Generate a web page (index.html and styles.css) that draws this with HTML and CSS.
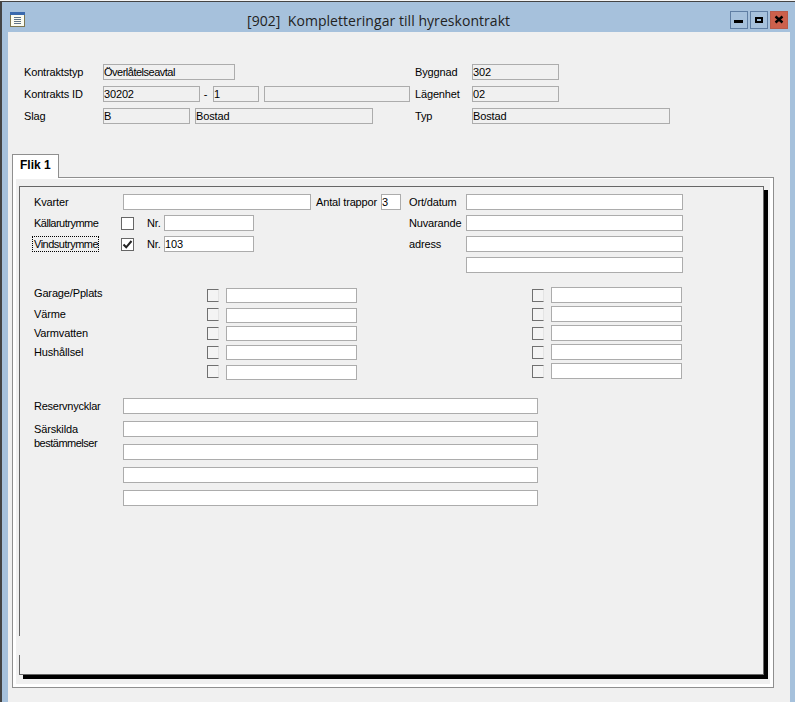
FILE: index.html
```html
<!DOCTYPE html>
<html lang="sv">
<head>
    <meta charset="UTF-8">
    <meta name="viewport" content="width=device-width, initial-scale=1.0">
    <title>Kompletteringar till hyreskontrakt</title>
    <link rel="stylesheet" href="styles.css">
</head>
<body>
<div class="window">
    <div class="titlebar">
        <svg class="app-icon" width="16" height="16" viewBox="0 0 16 16">
            <rect x="0.5" y="0.5" width="14" height="14" fill="#fbfbf0" stroke="#7d7650"/>
            <rect x="0" y="0" width="15" height="3" fill="#3a69ad"/>
            <path d="M4 5.5h7M4 7.5h7M4 9.5h7M4 11.5h7" stroke="#5f7388" stroke-width="1"/>
        </svg>
        <div class="title">[902]  Kompletteringar till hyreskontrakt</div>
        <div class="win-buttons">
            <div class="win-btn">
                <svg width="16" height="16" viewBox="0 0 16 16"><rect x="3" y="8" width="9" height="3" fill="#000"/></svg>
            </div>
            <div class="win-btn">
                <svg width="16" height="16" viewBox="0 0 16 16"><rect x="5" y="6" width="6" height="4" fill="none" stroke="#000" stroke-width="2"/></svg>
            </div>
            <div class="win-btn close">
                <svg width="16" height="16" viewBox="0 0 16 16"><path d="M4.5 4.5l7 6M11.5 4.5l-7 6" stroke="#000" stroke-width="2.4"/></svg>
            </div>
        </div>
    </div>

    <div class="content">
        <div class="head">
            <div class="head-left">
                <div class="row">
                    <label class="lbl w79">Kontraktstyp</label>
                    <input class="field ro w132 tight" value="Överlåtelseavtal" readonly>
                </div>
                <div class="row">
                    <label class="lbl w79">Kontrakts ID</label>
                    <input class="field ro w97" value="30202" readonly>
                    <span class="dash">-</span>
                    <input class="field ro w46" value="1" readonly>
                    <input class="field ro w146 ml5" readonly>
                </div>
                <div class="row">
                    <label class="lbl w79">Slag</label>
                    <input class="field ro w87" value="B" readonly>
                    <input class="field ro w178 ml5" value="Bostad" readonly>
                </div>
            </div>
            <div class="head-right">
                <div class="row">
                    <label class="lbl w57">Byggnad</label>
                    <input class="field ro w87" value="302" readonly>
                </div>
                <div class="row">
                    <label class="lbl w57">Lägenhet</label>
                    <input class="field ro w87" value="02" readonly>
                </div>
                <div class="row">
                    <label class="lbl w57">Typ</label>
                    <input class="field ro w198" value="Bostad" readonly>
                </div>
            </div>
        </div>

        <div class="tab">Flik 1</div>
        <div class="tab-panel">
            <div class="tab-inner">
                <div class="frame">
                    <div class="frame-gap"></div>

                    <div class="top-section">
                        <div class="top-left">
                            <div class="row">
                                <label class="lbl w89">Kvarter</label>
                                <input class="field w188" >
                                <label class="lbl ml5 w65">Antal trappor</label>
                                <input class="field w20" value="3">
                            </div>
                            <div class="row">
                                <label class="lbl w87 tight">Källarutrymme</label>
                                <span class="check"></span>
                                <label class="lbl nr">Nr.</label>
                                <input class="field w90">
                            </div>
                            <div class="row">
                                <div class="lbl w87"><label class="focused tight">Vindsutrymme</label></div>
                                <span class="check">
                                    <svg width="11" height="11" viewBox="0 0 11 11"><path d="M1.5 5.5l2.7 2.8L9.5 2" fill="none" stroke="#222" stroke-width="2"/></svg>
                                </span>
                                <label class="lbl nr">Nr.</label>
                                <input class="field w90" value="103">
                            </div>
                        </div>
                        <div class="top-right">
                            <div class="row">
                                <label class="lbl w57">Ort/datum</label>
                                <input class="field w217">
                            </div>
                            <div class="row">
                                <label class="lbl w57">Nuvarande</label>
                                <input class="field w217">
                            </div>
                            <div class="row">
                                <label class="lbl w57">adress</label>
                                <input class="field w217">
                            </div>
                            <div class="row">
                                <span class="w57"></span>
                                <input class="field w217">
                            </div>
                        </div>
                    </div>

                    <div class="options">
                        <div class="opt-labels">
                            <label class="lbl">Garage/Pplats</label>
                            <label class="lbl">Värme</label>
                            <label class="lbl">Varmvatten</label>
                            <label class="lbl">Hushållsel</label>
                        </div>
                        <div class="opt-list first">
                            <div class="opt-row"><span class="box"></span><input class="field w131"></div>
                            <div class="opt-row"><span class="box"></span><input class="field w131"></div>
                            <div class="opt-row"><span class="box"></span><input class="field w131"></div>
                            <div class="opt-row"><span class="box"></span><input class="field w131"></div>
                            <div class="opt-row"><span class="box"></span><input class="field w131"></div>
                        </div>
                        <div class="opt-list second">
                            <div class="opt-row"><span class="box"></span><input class="field w131"></div>
                            <div class="opt-row"><span class="box"></span><input class="field w131"></div>
                            <div class="opt-row"><span class="box"></span><input class="field w131"></div>
                            <div class="opt-row"><span class="box"></span><input class="field w131"></div>
                            <div class="opt-row"><span class="box"></span><input class="field w131"></div>
                        </div>
                    </div>

                    <div class="notes">
                        <div class="note-labels">
                            <label class="lbl narrow">Reservnycklar</label>
                            <label class="lbl special">Särskilda<br><span class="tight">bestämmelser</span></label>
                        </div>
                        <div class="note-fields">
                            <input class="field w415">
                            <input class="field w415">
                            <input class="field w415">
                            <input class="field w415">
                            <input class="field w415">
                        </div>
                    </div>
                </div>
            </div>
        </div>
    </div>
</div>
</body>
</html>
```

FILE: styles.css
```css
html, body {
    margin: 0;
    padding: 0;
    height: 702px;
    overflow: hidden;
    background-color: #f4f4f4;
}

body {
    font-family: "Liberation Sans", Arial, sans-serif;
    font-size: 11px;
    color: #000;
}

.window {
    margin-top: 1px;
    height: 701px;
    box-sizing: border-box;
    border-top: 1px solid #444;
    border-left: 2px solid #444;
    background-color: #a6c1dc;
    display: flex;
    flex-direction: column;
}

.titlebar {
    height: 30px;
    flex: none;
    display: flex;
    align-items: flex-start;
}

.app-icon {
    margin: 10px 0 0 8px;
    flex: none;
}

.title {
    margin: 9px 0 0 221px;
    font-family: "Open Sans", sans-serif;
    font-size: 14px;
    line-height: 20px;
    letter-spacing: 0.05px;
    color: #222;
    white-space: pre;
}

.win-buttons {
    margin: 9px 0 0 auto;
    padding-right: 7px;
    display: flex;
    gap: 2px;
}

.win-btn {
    width: 16px;
    height: 16px;
    border: 1px solid #5f7ea3;
    background-color: #a6c1dc;
}

.win-btn svg {
    display: block;
}

.win-btn.close {
    background-color: #cc604c;
    border-color: #b85a4a;
}

.content {
    flex: 1;
    margin: 0 5px 0 6px;
    background-color: #f0f0f0;
    padding: 32px 0 0 4px;
}

.head {
    display: flex;
    padding-left: 12px;
}

.head-left {
    width: 391px;
}

.head-left,
.head-right,
.top-left,
.top-right {
    display: flex;
    flex-direction: column;
    gap: 6px;
}

.top-left,
.top-right {
    gap: 5px;
}

.top-left {
    width: 375px;
}

.row {
    display: flex;
    align-items: center;
    height: 16px;
}

.lbl {
    display: block;
    line-height: 14px;
    letter-spacing: -0.15px;
    white-space: nowrap;
    flex: none;
}

.field {
    display: block;
    box-sizing: border-box;
    height: 16px;
    flex: none;
    margin: 0;
    padding: 0;
    border: 1px solid #acacac;
    border-radius: 0;
    background-color: #fff;
    font-family: "Liberation Sans", Arial, sans-serif;
    font-size: 11px;
    letter-spacing: -0.15px;
    color: #000;
    outline: none;
}

.field.ro {
    background-color: #f0f0f0;
}

.lbl.tight,
.field.tight,
.tight {
    letter-spacing: -0.5px;
}

.lbl.narrow {
    letter-spacing: -0.25px;
}

.w20 { width: 20px; }
.w46 { width: 46px; }
.w57 { width: 57px; flex: none; }
.w65 { width: 65px; }
.w79 { width: 79px; }
.w87 { width: 87px; }
.w89 { width: 89px; }
.w90 { width: 90px; }
.w97 { width: 97px; }
.w131 { width: 131px; }
.w132 { width: 132px; }
.w146 { width: 146px; }
.w178 { width: 178px; }
.w188 { width: 188px; }
.w198 { width: 198px; }
.w217 { width: 217px; }
.w415 { width: 415px; }

.ml5 {
    margin-left: 5px;
}

.dash {
    box-sizing: border-box;
    width: 13px;
    padding-right: 2px;
    text-align: center;
    flex: none;
}

.tab {
    position: relative;
    z-index: 1;
    box-sizing: border-box;
    width: 47px;
    height: 24px;
    margin: 30px 0 -1px 0;
    padding: 3px 0 0 7px;
    border: 1px solid #8f8f8f;
    border-bottom: none;
    background-color: #fff;
    font-weight: bold;
    font-size: 12px;
    line-height: 14px;
}

.tab-panel {
    box-sizing: border-box;
    width: 762px;
    height: 511px;
    border: 1px solid #8f8f8f;
}

.tab-inner {
    box-sizing: border-box;
    height: 509px;
    border: 3px solid #fff;
    border-top-width: 1px;
    background-color: #f0f0f0;
    padding: 7px 0 0 3px;
}

.frame {
    position: relative;
    box-sizing: border-box;
    width: 745px;
    height: 489px;
    border: 1px solid #666;
    box-shadow: 4px 4px 0 #000;
    padding: 7px 0 0 14px;
    background-color: #f0f0f0;
}

.frame-gap {
    position: absolute;
    left: -1px;
    top: 449px;
    width: 1px;
    height: 19px;
    background-color: #f0f0f0;
}

.top-section {
    display: flex;
}

.check {
    box-sizing: border-box;
    width: 13px;
    height: 13px;
    flex: none;
    border: 1px solid #666;
    background-color: #fff;
    display: block;
}

.check svg {
    display: block;
}

.nr {
    margin-left: 13px;
    width: 17px;
}

.focused {
    display: inline-block;
    margin-left: -1px;
    padding-left: 1px;
    outline: 1px dotted #000;
}

.options {
    display: flex;
    margin-top: 13px;
}

.opt-labels {
    width: 173px;
    flex: none;
    display: flex;
    flex-direction: column;
    gap: 5px;
}

.opt-labels .lbl:first-child {
    margin-bottom: 2px;
}

.opt-list {
    display: flex;
    flex-direction: column;
}

.opt-list.first {
    width: 325px;
    margin-top: 2px;
}

.opt-list.second {
    margin-top: 1px;
    gap: 3px;
}

.opt-row {
    display: flex;
    align-items: flex-start;
    gap: 7px;
}

.box {
    box-sizing: border-box;
    width: 12px;
    height: 13px;
    margin-top: 2px;
    flex: none;
    border: 1px solid #707070;
    border-right-color: #e4e4e4;
    background-color: #f4f4f4;
}

.first .box {
    margin-top: 1px;
}

.first .field {
    height: 15px;
}

.first .opt-row:nth-child(2) {
    margin-top: 5px;
}

.first .opt-row:nth-child(2) .box,
.first .opt-row:nth-child(5) .box {
    margin-top: 0;
}

.first .opt-row:nth-child(3) {
    margin-top: 3px;
}

.first .opt-row:nth-child(4) {
    margin-top: 4px;
}

.first .opt-row:nth-child(5) {
    margin-top: 5px;
}

.notes {
    display: flex;
    margin-top: 18px;
}

.note-labels {
    width: 89px;
    flex: none;
    padding-top: 1px;
}

.special {
    margin-top: 9px;
}

.note-fields {
    display: flex;
    flex-direction: column;
    gap: 7px;
}
```
